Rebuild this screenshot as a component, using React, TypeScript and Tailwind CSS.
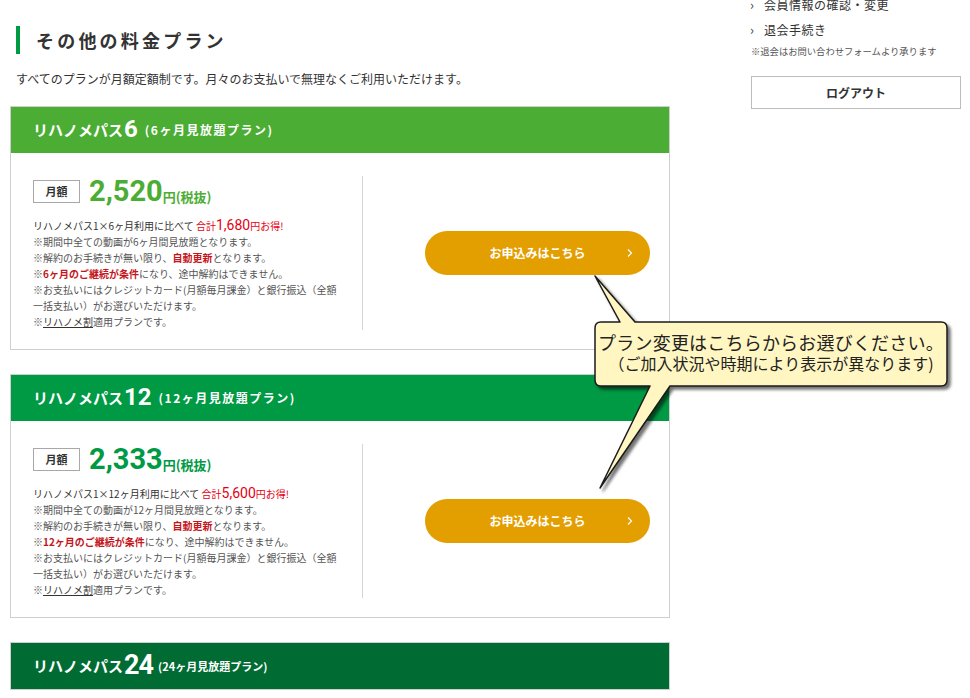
import React from 'react';

const jp = "font-['Noto_Sans_CJK_JP',sans-serif]";

type Plan = {
  months: number;
  header: string;
  price: string;
  priceColor: string;
  saving: string;
  compact?: boolean;
};

const plans: Plan[] = [
  { months: 6, header: 'bg-[#4bad33]', price: '2,520', priceColor: 'text-[#4bad33]', saving: '1,680' },
  { months: 12, header: 'bg-[#009944]', price: '2,333', priceColor: 'text-[#009944]', saving: '5,600' },
  { months: 24, header: 'bg-[#006c33]', price: '', priceColor: '', saving: '', compact: true },
];

const PlanCard: React.FC<{ plan: Plan }> = ({ plan }) => (
  <div className="border border-[#cfcfcf] bg-white">
    <div className={`${plan.header} h-[46px] flex items-center px-[22px] text-white font-bold`}>
      <span className="text-[15px]">リハノメパス</span>
      <span className={`font-['Roboto',sans-serif] ${plan.compact ? 'text-[27px] tracking-[-1px]' : 'text-[24px]'} leading-none ml-[1px] relative -top-[1px]`}>
        {plan.months}
      </span>
      <span className={`${plan.compact ? 'text-[11px] ml-[5px]' : 'text-[12px] tracking-[1.5px] ml-[7px]'}`}>
        ({plan.months}ヶ月見放題プラン)
      </span>
    </div>
    {!plan.compact && (
      <div className="flex pt-[23px] pb-[19px]">
        <div className="w-[352px] pl-[22px] pr-[10px] border-r border-[#d6d6d6] pt-[4px]">
          <div className="flex items-center h-[23px]">
            <div className="w-[47px] h-[23px] border border-[#a8a8a8] flex items-center justify-center text-[11px] font-bold text-[#333]">
              月額
            </div>
            <span className={`ml-[9px] font-['Roboto',sans-serif] font-bold text-[29px] leading-[23px] ${plan.priceColor}`}>
              {plan.price}
            </span>
            <span className={`text-[13px] leading-[13px] font-bold mt-[9px] ${plan.priceColor}`}>円(税抜)</span>
          </div>
          <div className="mt-[15px] text-[10px] leading-[16px] text-[#555]">
            <p className="text-[#333] h-[16px]">
              リハノメパス1×{plan.months}ヶ月利用に比べて{' '}
              <span className="text-[#e60012]">
                合計<span className="font-['Roboto',sans-serif] text-[14px] leading-none">{plan.saving}</span>円お得!
              </span>
            </p>
            <p>※期間中全ての動画が{plan.months}ヶ月間見放題となります。</p>
            <p>
              ※解約のお手続きが無い限り、<span className="text-[#c4161c] font-bold">自動更新</span>となります。
            </p>
            <p>
              ※<span className="text-[#c4161c] font-bold">{plan.months}ヶ月のご継続が条件</span>になり、途中解約はできません。
            </p>
            <p>
              ※お支払いにはクレジットカード(月額毎月課金）と銀行振込（全額
              <br />
              一括支払い）がお選びいただけます。
            </p>
            <p>
              ※<span className="underline text-[#333]">リハノメ割</span>適用プランです。
            </p>
          </div>
        </div>
        <div className="flex-1 flex items-center pl-[62px]">
          <button
            type="button"
            className="relative w-[225px] h-[44px] rounded-full bg-[#e39e00] text-white text-[12px] font-bold flex items-center justify-center"
          >
            お申込みはこちら
            <svg className="absolute right-[17px] top-1/2 -translate-y-1/2" width="6" height="9" viewBox="0 0 6 9">
              <path d="M1 1l3.5 3.5L1 8" fill="none" stroke="#fff" strokeWidth="1.2" />
            </svg>
          </button>
        </div>
      </div>
    )}
  </div>
);

const Callout: React.FC = () => (
  <>
    <svg className="absolute left-0 top-0 pointer-events-none" width="970" height="698">
      <defs>
        <filter id="sh" x="-10%" y="-10%" width="120%" height="130%">
          <feDropShadow dx="3" dy="3" stdDeviation="1.5" floodColor="#000" floodOpacity="0.55" />
        </filter>
      </defs>
      <path
        d="M601 322 L620 322 L595 276 L635 322 L941 322 Q947 322 947 328 L947 380 Q947 386 941 386 L670 386 L600 488 L650 386 L601 386 Q595 386 595 380 L595 328 Q595 322 601 322 Z"
        fill="#fff6c2"
        stroke="#1a1a1a"
        strokeWidth="1.5"
        strokeLinejoin="round"
        filter="url(#sh)"
      />
    </svg>
    <div className={`absolute left-[595px] top-[321px] w-[352px] h-[63px] flex flex-col items-center justify-center text-[#222] ${jp}`}>
      <p className="text-[18px] leading-[23px] tracking-[0.2px]">プラン変更はこちらからお選びください。</p>
      <p className="text-[16px] leading-[21px] -mt-[1px]">（ご加入状況や時期により表示が異なります)</p>
    </div>
  </>
);

export default function App() {
  return (
    <div className={`relative w-[970px] h-[698px] overflow-hidden bg-white text-[#333] ${jp}`}>
      <div className="flex">
        <main className="w-[660px] ml-[10px]">
          <div className="mt-[26px] ml-[6px] flex items-center h-[28px]">
            <div className="w-[4px] h-[28px] bg-[#009944]" />
            <h2 className="ml-[16px] text-[18px] font-bold tracking-[3.2px] text-[#333]">その他の料金プラン</h2>
          </div>
          <p className="mt-[17px] ml-[6px] text-[12px] leading-[16px] text-[#333]">
            すべてのプランが月額定額制です。月々のお支払いで無理なくご利用いただけます。
          </p>
          <div className="mt-[19px] flex flex-col gap-[24px]">
            {plans.map((p) => (
              <PlanCard key={p.months} plan={p} />
            ))}
          </div>
        </main>
        <aside className="ml-[80px] w-[210px] -mt-[4px]">
          <ul className="text-[12px] leading-[18px] text-[#333]">
            <li className="flex items-center">
              <span className="w-[12px] text-[#444] text-[13px]">›</span>
              <span className="ml-[2px] tracking-[0.5px]">会員情報の確認・変更</span>
            </li>
            <li className="flex items-center mt-[7px]">
              <span className="w-[12px] text-[#444] text-[13px]">›</span>
              <span className="ml-[2px] tracking-[0.5px]">退会手続き</span>
            </li>
          </ul>
          <p className="mt-[5px] ml-[1px] text-[9.3px] leading-[14px] text-[#555]">※退会はお問い合わせフォームより承ります</p>
          <button
            type="button"
            className="mt-[18px] ml-[1px] w-[210px] h-[33px] border border-[#bdbdbd] bg-white text-[12px] font-bold text-[#333]"
          >
            ログアウト
          </button>
        </aside>
      </div>
      <Callout />
    </div>
  );
}
